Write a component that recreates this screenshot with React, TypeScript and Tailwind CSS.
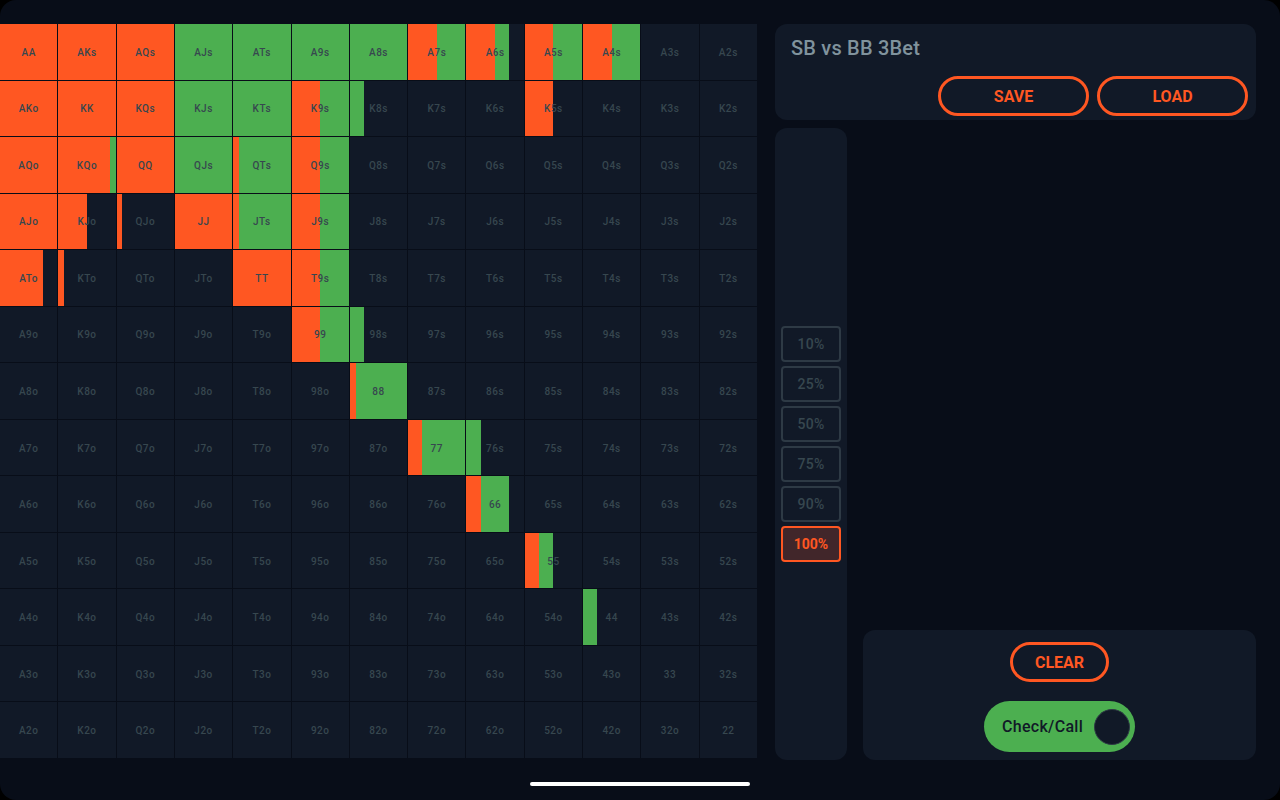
const ranks = ["A", "K", "Q", "J", "T", "9", "8", "7", "6", "5", "4", "3", "2"];

// share of the cell taken by [raise, call]
const mix: Record<string, [number, number]> = {
  AA: [1, 0], AKs: [1, 0], AQs: [1, 0], AJs: [0, 1], ATs: [0, 1], A9s: [0, 1], A8s: [0, 1],
  A7s: [0.5, 0.5], A6s: [0.5, 0.25], A5s: [0.5, 0.5], A4s: [0.5, 0.5],
  AKo: [1, 0], KK: [1, 0], KQs: [1, 0], KJs: [0, 1], KTs: [0, 1], K9s: [0.5, 0.5], K8s: [0, 0.25], K5s: [0.5, 0],
  AQo: [1, 0], KQo: [0.9, 0.1], QQ: [1, 0], QJs: [0, 1], QTs: [0.1, 0.9], Q9s: [0.5, 0.5],
  AJo: [1, 0], KJo: [0.5, 0], QJo: [0.1, 0], JJ: [1, 0], JTs: [0.1, 0.9], J9s: [0.5, 0.5],
  ATo: [0.75, 0], KTo: [0.1, 0], TT: [1, 0], T9s: [0.5, 0.5],
  "99": [0.5, 0.5], "98s": [0, 0.25],
  "88": [0.1, 0.9],
  "77": [0.25, 0.75], "76s": [0, 0.25],
  "66": [0.25, 0.5],
  "55": [0.25, 0.25],
  "44": [0, 0.25],
};

const hands = ranks.flatMap((r, row) =>
  ranks.map((c, col) => {
    if (row === col) return r + c;
    return row < col ? r + c + "s" : c + r + "o";
  })
);

const sizes = ["10%", "25%", "50%", "75%", "90%"];

const Cell = ({ hand }: { hand: string }) => {
  const [raise, call] = mix[hand] ?? [0, 0];
  return (
    <div className="relative flex bg-[#111927]">
      {raise > 0 && <div className="h-full bg-[#ff5722]" style={{ width: `${raise * 100}%` }} />}
      {call > 0 && <div className="h-full bg-[#4caf50]" style={{ width: `${call * 100}%` }} />}
      <span className="absolute inset-0 flex items-center justify-center pt-px text-[10px] font-medium tracking-[0.5px] text-[#37474f]">
        {hand}
      </span>
    </div>
  );
};

const OutlineButton = ({ label, className }: { label: string; className: string }) => (
  <button className={`h-10 rounded-full border-[3px] border-[#ff5722] pt-px text-base font-bold text-[#ff5722] ${className}`}>
    {label}
  </button>
);

export default function App() {
  return (
    <div className="h-[800px] w-[1280px] overflow-hidden bg-black font-['Roboto',sans-serif]">
      <div className="flex h-full w-full rounded-[16px] bg-[#080d18] pt-6">
        <div className="grid h-[734px] w-[757px] grid-cols-[repeat(13,minmax(0,1fr))] grid-rows-[repeat(13,minmax(0,1fr))] gap-px">
          {hands.map((hand) => (
            <Cell key={hand} hand={hand} />
          ))}
        </div>

        <div className="ml-[18px] flex h-[736px] w-[481px] flex-col gap-2">
          <div className="flex h-24 flex-col rounded-xl bg-[#111927] pr-2 pl-4">
            <h1 className="mt-[11px] text-xl leading-[26px] font-medium tracking-[0.2px] text-[#80939d]">SB vs BB 3Bet</h1>
            <div className="mt-[15px] flex justify-end gap-2">
              <OutlineButton label="SAVE" className="w-[151px]" />
              <OutlineButton label="LOAD" className="w-[151px]" />
            </div>
          </div>

          <div className="flex flex-1 gap-4">
            <div className="flex w-[72px] flex-col items-center justify-center gap-1 rounded-xl bg-[#111927]">
              {sizes.map((size) => (
                <div
                  key={size}
                  className="flex h-9 w-[60px] items-center justify-center rounded-[4px] border-2 border-[#2e3a45] text-sm font-medium tracking-[0.3px] text-[#37474f]"
                >
                  {size}
                </div>
              ))}
              <div className="flex h-9 w-[60px] items-center justify-center rounded-[4px] border-2 border-[#ff5722] bg-[#41262a] text-sm font-bold text-[#ff5722]">
                100%
              </div>
            </div>

            <div className="flex flex-1 flex-col justify-end">
              <div className="flex h-[130px] flex-col items-center rounded-xl bg-[#111927] pt-3">
                <OutlineButton label="CLEAR" className="w-[99px]" />
                <div className="mt-[19px] flex h-[51px] w-[151px] items-center justify-between rounded-full bg-[#4caf50] pr-[5px] pl-[18px]">
                  <span className="text-base font-medium tracking-[0.3px] text-[#111927]">Check/Call</span>
                  <span className="size-9 rounded-full border border-[#2e3a45] bg-[#111927]" />
                </div>
              </div>
            </div>
          </div>
        </div>
      </div>
      <div className="absolute top-[782px] left-[530px] h-1 w-[220px] rounded-full bg-white" />
    </div>
  );
}
